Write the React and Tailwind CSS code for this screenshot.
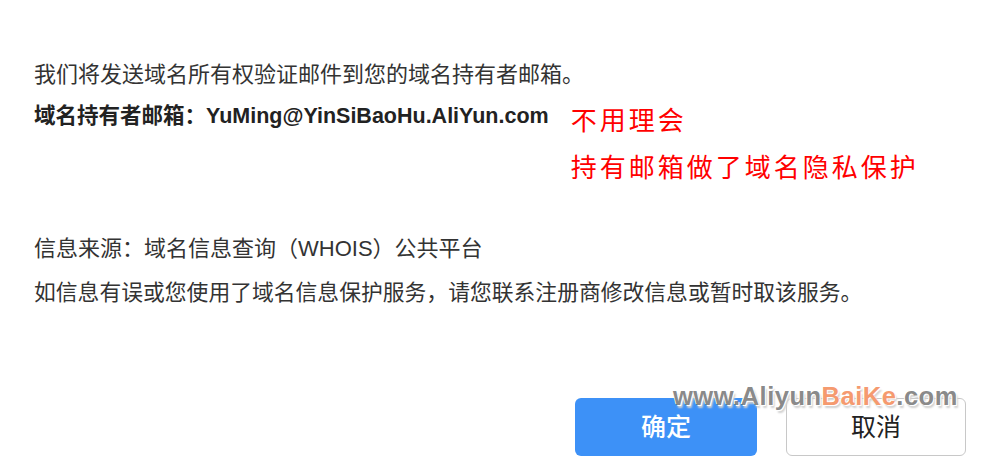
export default function App() {
    const font = { fontFamily: '"Liberation Sans", "Noto Sans CJK SC", sans-serif' };

    return (
        <div className="relative w-[1000px] h-[476px] bg-white overflow-hidden" style={font}>
            <div className="flex flex-col pl-[34px] pr-[34px] pt-[59px] text-[22px] leading-[32px] text-[#333333]">
                <p>我们将发送域名所有权验证邮件到您的域名持有者邮箱。</p>

                <div className="flex items-start mt-[9px]">
                    <p className="font-bold text-[21.5px] text-[#222222] whitespace-nowrap">
                        域名持有者邮箱：YuMing@YinSiBaoHu.AliYun.com
                    </p>
                    <div className="ml-[22px] mt-[-2px] flex flex-col text-[26px] leading-[47px] tracking-[3px] text-[#ff0000] whitespace-nowrap">
                        <span>不用理会</span>
                        <span>持有邮箱做了域名隐私保护</span>
                    </div>
                </div>

                <p className="mt-[41px]">信息来源：域名信息查询（WHOIS）公共平台</p>
                <p className="mt-[12px] text-[21.8px] whitespace-nowrap">
                    如信息有误或您使用了域名信息保护服务，请您联系注册商修改信息或暂时取该服务。
                </p>

                <div className="flex justify-end gap-[29px] mt-[89px]">
                    <button className="w-[182px] h-[58px] rounded-[6px] bg-[#3d91f7] text-white text-[25px] font-medium">
                        确定
                    </button>
                    <button className="w-[180px] h-[58px] rounded-[6px] border border-[#c8c8c8] bg-white text-[#222222] text-[25px]">
                        取消
                    </button>
                </div>
            </div>

            <div
                className="absolute left-[673px] top-[377px] text-[25.5px] font-bold tracking-[0.5px] text-[#6a6a6a]/80 [text-shadow:1px_1px_0_#ffffff,-1px_-1px_0_#ffffff,2px_3px_2px_#d0d0d0]"
            >
                www.Aliyun<span className="text-[#f59a6f]">BaiKe</span>.com
            </div>
        </div>
    );
}
